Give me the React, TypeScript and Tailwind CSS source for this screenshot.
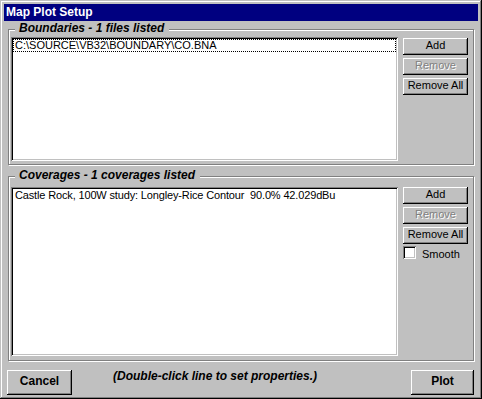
const raised =
  "shadow-[inset_-1px_-1px_0_#000,inset_1px_1px_0_#fff,inset_-2px_-2px_0_#808080]";
const sunken =
  "shadow-[inset_1px_1px_0_#808080,inset_-1px_-1px_0_#fff,inset_2px_2px_0_#000,inset_-2px_-2px_0_#c0c0c0]";

function Btn({ label, disabled }: { label: string; disabled?: boolean }) {
  return (
    <div
      className={`h-[17px] w-[65px] bg-[#c0c0c0] ${raised} flex items-center justify-center pb-[2px] text-[11px] leading-[13px] ${
        disabled ? "text-[#808080] [text-shadow:1px_1px_0_#fff]" : "text-black"
      }`}
    >
      {label}
    </div>
  );
}

function GroupBox({
  title,
  height,
  top,
  children,
}: {
  title: string;
  height: string;
  top: string;
  children: React.ReactNode;
}) {
  return (
    <div
      className={`relative ${height} border border-[#808080] shadow-[1px_1px_0_#fff,inset_1px_1px_0_#fff] flex pl-[2px] pr-[5px] ${top}`}
    >
      <div className="absolute -top-[8px] left-[6px] pl-[4px] pr-[5px] bg-[#c0c0c0] text-[12px] leading-[13px] font-bold italic text-black">
        {title}
      </div>
      {children}
    </div>
  );
}

export default function App() {
  return (
    <div className="w-[482px] h-[399px] bg-[#c0c0c0] p-[4px] flex flex-col font-['Liberation_Sans',Arial,sans-serif] shadow-[inset_-1px_-1px_0_#000,inset_1px_1px_0_#c0c0c0,inset_-2px_-2px_0_#808080,inset_2px_2px_0_#fff]">
      <div className="h-[17px] bg-[#000080] text-white font-bold text-[12px] leading-[17px] pl-[2px]">
        Map Plot Setup
      </div>

      <div className="flex-1 flex flex-col px-[4px] pt-[8px]">
        <GroupBox title="Boundaries - 1 files listed" height="h-[136px]" top="pt-[7px]">
          <div className={`w-[387px] h-[124px] bg-white ${sunken} p-[2px]`}>
            <div className="h-[13px] border border-dotted border-black pl-[1px] text-[11px] leading-[11px] text-black whitespace-pre">
              C:\SOURCE\VB32\BOUNDARY\CO.BNA
            </div>
          </div>
          <div className="ml-[5px] mt-[1px] flex flex-col gap-[3px]">
            <Btn label="Add" />
            <Btn label="Remove" disabled />
            <Btn label="Remove All" />
          </div>
        </GroupBox>

        <div className="mt-[11px]">
          <GroupBox title="Coverages - 1 coverages listed" height="h-[185px]" top="pt-[10px]">
            <div className={`w-[387px] h-[169px] bg-white ${sunken} p-[2px]`}>
              <div className="h-[13px] border border-transparent pl-[1px] text-[11px] leading-[11px] tracking-[-0.15px] text-black whitespace-pre">
                Castle Rock, 100W study: Longley-Rice Contour  90.0% 42.029dBu
              </div>
            </div>
            <div className="ml-[5px] flex flex-col gap-[3px]">
              <Btn label="Add" />
              <Btn label="Remove" disabled />
              <Btn label="Remove All" />
              <div className="flex items-start gap-[6px] -mt-[1px]">
                <div className={`w-[13px] h-[13px] bg-white ${sunken}`} />
                <span className="text-[11px] leading-[13px] pt-[2px] text-black">Smooth</span>
              </div>
            </div>
          </GroupBox>
        </div>

        <div className="mt-[9px] flex items-start -ml-[1px]">
          <div
            className={`w-[65px] h-[25px] bg-[#c0c0c0] ${raised} flex items-center justify-center pb-[3px] text-[12px] font-bold text-black`}
          >
            Cancel
          </div>
          <div className="ml-[41px] text-[12px] leading-[13px] font-bold italic text-black">
            (Double-click line to set properties.)
          </div>
          <div
            className={`ml-auto w-[63px] h-[25px] bg-[#c0c0c0] ${raised} flex items-center justify-center pb-[3px] text-[12px] font-bold text-black`}
          >
            Plot
          </div>
        </div>
      </div>
    </div>
  );
}
